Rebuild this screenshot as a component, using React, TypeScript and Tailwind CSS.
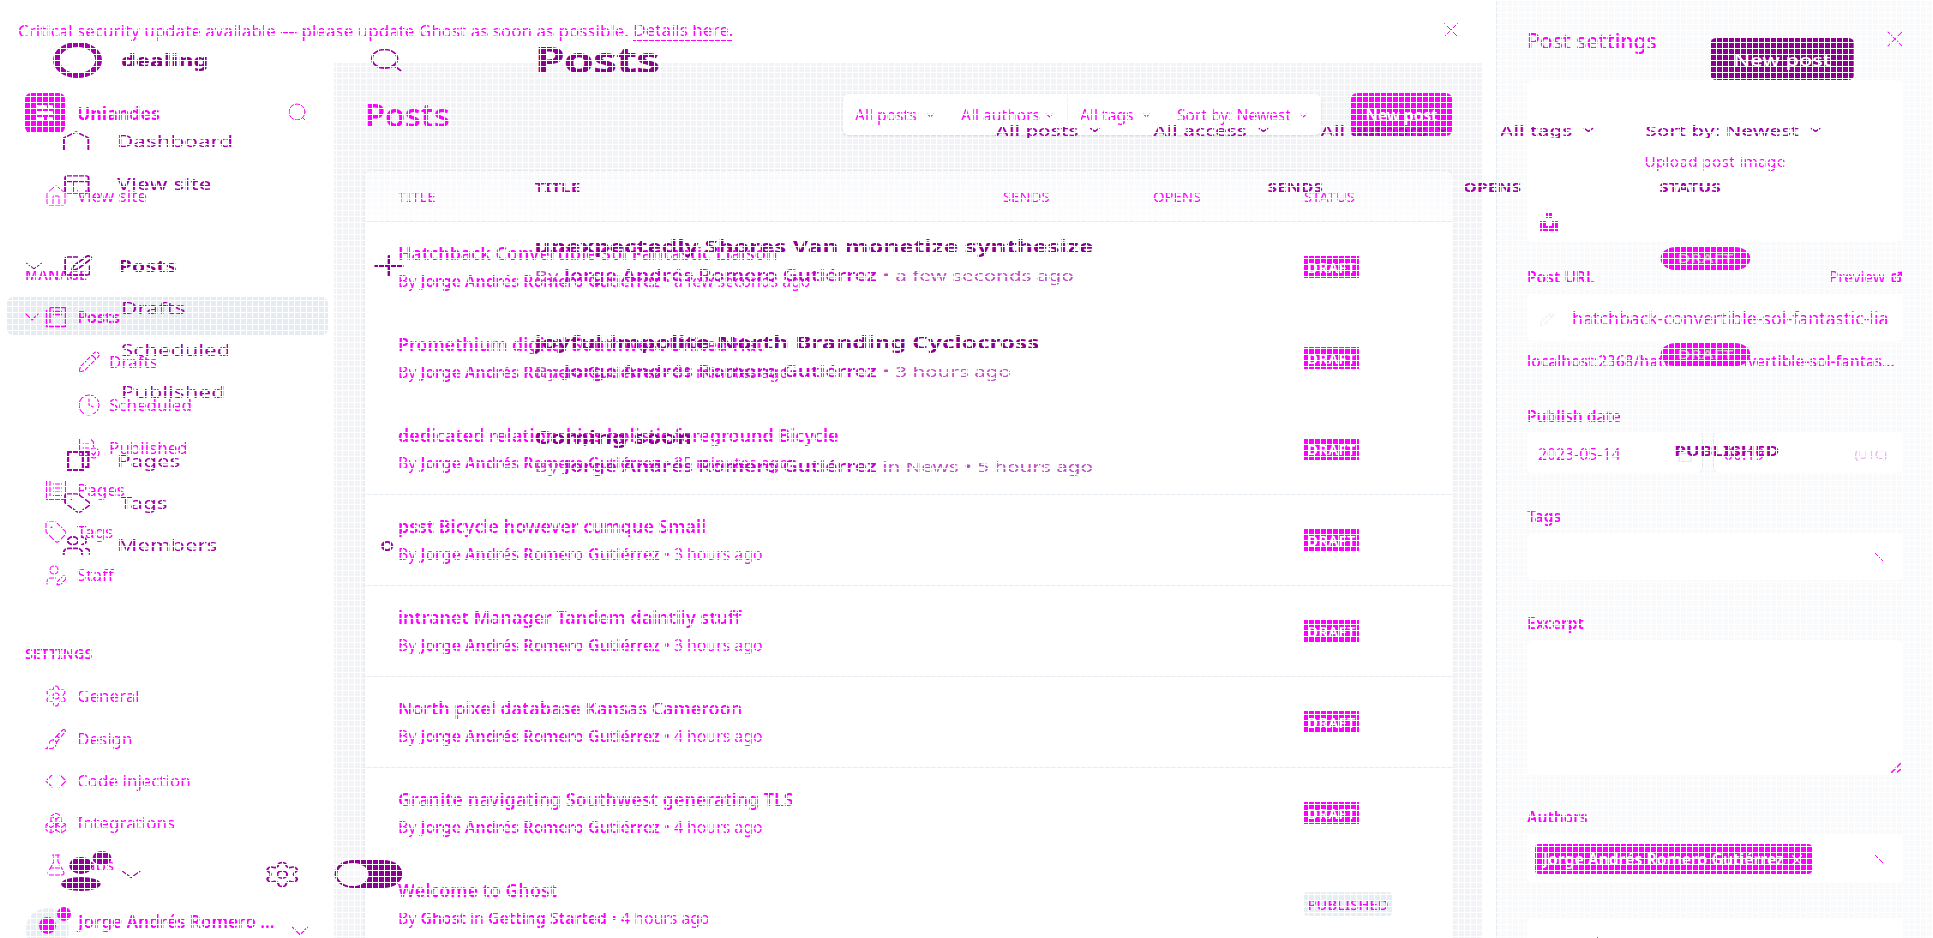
import React from "react";
import {
  Search, Home, ChevronDown, PanelsTopLeft, SquarePen, Pencil, Clock, Tag, Users, UserPen,
  Settings, Code, Boxes, FlaskConical, X, Plus, ExternalLink, Calendar,
} from "lucide-react";

const M = "text-[#ff00ff]";

type IconProps = { className?: string; strokeWidth?: number };

function PageIcon({ className }: IconProps) {
  return (
    <svg viewBox="0 0 24 24" className={className} fill="none" stroke="currentColor" strokeWidth="1.1">
      <path d="M2.5 2V21.5H21.5V2M6 2.5V18M9 6H18M9 10H18M9 14H18M9 17.5H18" />
    </svg>
  );
}

function PostIcon({ className }: IconProps) {
  return (
    <svg viewBox="0 0 24 24" className={className} fill="none" stroke="currentColor" strokeWidth="1.4">
      <path d="M6 2.5H21.5V21.5H2.5V5M6 2.5V18M9 6.5H18M9 9.5H18" />
    </svg>
  );
}

function PublishedIcon({ className }: IconProps) {
  return (
    <svg viewBox="0 0 24 24" className={className} fill="none" stroke="currentColor" strokeWidth="1.2">
      <path d="M10 19.5H2.5V2.5H13L16.5 6V11M5.5 8H12M5.5 12H12M5.5 16H10" /><circle cx="17" cy="17" r="5" /><path d="M14.5 17L16.5 19L19.5 15.5" />
    </svg>
  );
}

function BrushIcon({ className }: IconProps) {
  return (
    <svg viewBox="0 0 24 24" className={className} fill="none" stroke="currentColor" strokeWidth="1.2">
      <path d="M9 13L18.5 3Q21 1.500 21.500 4L12.500 15.500M9 13Q11.500 13 12.500 15.500M9 13Q5.500 13 5 17Q4.500 20.500 2.500 21.500Q9 22.500 11 19.500Q12.500 17.500 12.500 15.500M13 9L16 12" />
    </svg>
  );
}

type Item = { label: string; icon: React.ElementType; row: string };

const manage: Item[] = [
  { label: "Pages", icon: PageIcon, row: "h-[42px]" },
  { label: "Tags", icon: Tag, row: "h-[42px]" },
  { label: "Staff", icon: UserPen, row: "h-[43px]" },
];
const sub: Item[] = [
  { label: "Drafts", icon: Pencil, row: "h-[42px]" },
  { label: "Scheduled", icon: Clock, row: "h-[43px]" },
  { label: "Published", icon: PublishedIcon, row: "h-[43px]" },
];
const settings: Item[] = [
  { label: "General", icon: Settings, row: "h-[42px]" },
  { label: "Design", icon: BrushIcon, row: "h-[43px]" },
  { label: "Code injection", icon: Code, row: "h-[42px]" },
  { label: "Integrations", icon: Boxes, row: "h-[42px]" },
  { label: "Labs", icon: FlaskConical, row: "h-[42px]" },
];

function NavRow({ item, nested }: { item: Item; nested?: boolean }) {
  const Icon = item.icon;
  return (
    <div className={`flex items-center ${item.row} ${nested ? "pl-[77px]" : "pl-[44px]"}`}>
      <Icon className="size-6" strokeWidth={1.1} />
      <span className={nested ? "ml-[8px]" : "ml-[9px]"}>{item.label}</span>
    </div>
  );
}

function Sidebar() {
  return (
    <aside className={`flex w-[334px] shrink-0 flex-col text-[17px] [&>*]:shrink-0 ${M}`}>
      <div className="flex h-[100px] items-center pl-[25px] pr-[24px]">
        <div className="flex size-10 items-center justify-center rounded-md bg-[#ff00ff]">
          <svg viewBox="0 0 20 18" className="w-5" fill="white">
            <rect x="1" y="1" width="11" height="3" /><rect x="14" y="1" width="4" height="3" />
            <rect x="1" y="7" width="17" height="3" /><rect x="1" y="13" width="8" height="3" /><rect x="12" y="13" width="6" height="3" />
          </svg>
        </div>
        <span className="ml-[12px] text-[17.7px] font-bold">Uniandes</span>
        <Search className="ml-auto size-6" strokeWidth={1} />
      </div>
      <div className="flex h-[66px] items-center pl-[44px]">
        <Home className="size-6" strokeWidth={1} /><span className="ml-[9px]">View site</span>
      </div>
      <div className="flex h-[92px] items-center pl-[25px] text-[14.3px] font-semibold">MANAGE</div>
      <div className="-mt-6 ml-[7px] mr-[6px] flex h-[38px] items-center rounded-md bg-[#e6ebf1] pl-[13px] pt-[2px] font-bold">
        <ChevronDown className="size-6" strokeWidth={1.1} />
        <PostIcon className="size-6" />
        <span className="ml-[9px] text-[16px]">Posts</span>
      </div>
      <div className="mt-[6px]">{sub.map((i) => <NavRow key={i.label} item={i} nested />)}</div>
      <div>{manage.map((i) => <NavRow key={i.label} item={i} />)}</div>
      <div className="mt-[46px] flex h-[24px] items-center pl-[25px] text-[14.3px] font-semibold">SETTINGS</div>
      <div className="mt-[9px]">{settings.map((i) => <NavRow key={i.label} item={i} />)}</div>
      <div className="mt-[22px] flex items-start pl-[26px]">
        <div className="relative h-[44px] w-[43px] overflow-hidden rounded-full bg-[#e6eef5]">
          <div className="mx-auto mt-[9px] size-[17px] rounded-full bg-[#ff00ff]" />
        </div>
        <div className="relative">
          <div className="absolute -left-[12px] -top-[1px] size-[14px] rounded-full bg-[#ff00ff]" />
        </div>
        <span className="ml-[9px] mt-px text-[17.2px] font-semibold">Jorge Andrés Romero ...</span>
        <ChevronDown className="ml-auto mr-[19px] mt-[8px] size-[30px]" strokeWidth={0.9} />
      </div>
    </aside>
  );
}

const by = "Jorge Andrés Romero Gutiérrez";
const posts = [
  { t: "Hatchback Convertible Sol Fantastic Liaison", a: by, w: "• a few seconds ago" },
  { t: "Promethium digital Southwest United Hat", a: by, w: "• 31 minutes ago" },
  { t: "dedicated relationships holistic foreground Bicycle", a: by, w: "• 35 minutes ago" },
  { t: "psst Bicycle however cumque Small", a: by, w: "• 3 hours ago" },
  { t: "intranet Manager Tandem daintily stuff", a: by, w: "• 3 hours ago" },
  { t: "North pixel database Kansas Cameroon", a: by, w: "• 4 hours ago" },
  { t: "Granite navigating Southwest generating TLS", a: by, w: "• 4 hours ago" },
  { t: "Welcome to Ghost", a: "Ghost", i: "in", c: "Getting Started", w: "• 4 hours ago" },
];

function Filter({ label, cls }: { label: string; cls: string }) {
  return (
    <div className={`flex items-center justify-between whitespace-nowrap pl-[12px] pr-[12px] pt-[2px] ${cls}`}>
      {label}<ChevronDown className="size-[11px]" strokeWidth={2.6} />
    </div>
  );
}

function Main() {
  return (
    <main className={`flex w-[1148px] shrink-0 flex-col bg-[#f2f3f6] pl-[31px] pr-[30px] ${M}`}>
      <div className="mt-[30px] flex h-[43px] items-center">
        <h1 className="text-[32.7px] font-semibold tracking-[-0.2px]">Posts</h1>
        <div className="ml-auto flex h-[41px] w-[478px] rounded-md bg-white text-[15.6px] shadow-sm">
          <Filter label="All posts" cls="w-[105px]" />
          <Filter label="All authors" cls="w-[119px] border-l border-[#f2f3f6]" />
          <Filter label="All tags" cls="w-[97px] border-l border-[#f2f3f6]" />
          <Filter label="Sort by: Newest" cls="w-[157px] border-l border-[#f2f3f6]" />
        </div>
        <div className="ml-[30px] flex h-[43px] w-[101px] items-center justify-center rounded-md bg-[#ff00ff] pt-[2px] text-[15.7px] font-semibold text-white">New post</div>
      </div>
      <div className="mt-[35px] flex-1 rounded-t-md bg-white shadow-[0_0_3px_rgba(0,0,0,0.1)]">
        <div className="flex h-[51px] items-center rounded-t-md border-b border-[#e5ecf4] bg-gradient-to-b from-[#f8f9fc] to-[#fdfdfe] pl-[33px] text-[14.8px]">
          <span className="w-[605px]">TITLE</span><span className="w-[150px]">SENDS</span><span className="w-[151px]">OPENS</span><span>STATUS</span>
        </div>
        {posts.map((p, n) => (
          <div key={p.t} className={`flex h-[91px] items-center border-b pl-[33px] ${n < 2 ? "border-white" : "border-[#e5ecf4]"}`}>
            <div className="w-[906px]">
              <div className="-mt-[2px] text-[17.9px] font-semibold leading-[26px]">{p.t}</div>
              <div className="mt-[3px] text-[15.8px] leading-6">
                By <b className="font-semibold">{p.a}</b> {p.i} {p.c && <b className="font-semibold">{p.c} </b>}{p.w}
              </div>
            </div>
            {n < 7 ? (
              <div className="flex h-[22px] w-[55px] items-center justify-center bg-[#ff00ff] text-[14.7px] font-semibold tracking-[0.4px] text-white">DRAFT</div>
            ) : (
              <div className="flex h-6 w-[88px] items-center justify-center rounded bg-[#e6eef5] text-[14.8px] font-medium">PUBLISHED</div>
            )}
          </div>
        ))}
      </div>
    </main>
  );
}

function Label({ children, cls }: { children: React.ReactNode; cls: string }) {
  return <div className={`flex items-center text-[15.6px] font-semibold ${cls}`}>{children}</div>;
}

function Tick() {
  return <svg viewBox="0 0 8 8" className="size-2" stroke="#ff00ff"><path d="M0 0L8 8" /></svg>;
}

function Panel() {
  return (
    <section className={`ml-auto flex h-full w-[437px] shrink-0 flex-col overflow-hidden border-l border-[#e5ecf4] bg-[#f9fafc] pl-[30px] pr-[30px] ${M}`}>
      <div className="flex h-20 shrink-0 items-center justify-between text-[21px] font-medium">
        <span className="mt-[3px]">Post settings</span><X className="-mr-[6px] -mt-[3px] size-[28px]" strokeWidth={0.9} />
      </div>
      <div className="flex h-[162px] shrink-0 flex-col items-center rounded-md bg-white">
        <div className="mt-[60px] flex h-[42px] w-[169px] items-center justify-center whitespace-nowrap rounded-md text-[15.3px] tracking-[0.3px]">Upload post image</div>
        <svg viewBox="0 0 18 18" className="ml-[13px] mt-[31px] size-[18px] self-start" fill="#ff00ff"><path d="M6 0h6v5H6zM0 8h6v5h6V8h6v10H0z" /></svg>
      </div>
      <div className="mt-[19px] flex h-[33px] shrink-0 items-center justify-between">
        <Label cls="h-6">Post URL</Label>
        <span className="flex items-center gap-[6px] text-[15.4px]">Preview <ExternalLink className="size-[12px]" strokeWidth={3.5} /></span>
      </div>
      <div className="flex h-[47px] shrink-0 items-center overflow-hidden rounded-md bg-white pl-3 pt-[2px] text-[17.8px]">
        <Pencil className="size-4 text-[#edf0f3]" /><span className="ml-[17px] whitespace-nowrap">hatchback-convertible-sol-fantastic-lia</span>
      </div>
      <div className="flex h-10 shrink-0 items-center whitespace-nowrap pt-px text-[15.5px] font-medium">localhost:2368/hatchback-convertible-sol-fantas...</div>
      <Label cls="mt-[20px] h-[31px] shrink-0">Publish date</Label>
      <div className="flex h-[41px] shrink-0 items-center gap-[10px] text-[15.8px]">
        <div className="flex h-full w-[176px] items-center justify-between rounded-md border-r border-[#dfe6ec] bg-white pl-[11px] pr-[9px] pt-[4px]">2023-05-14<Calendar className="size-4 text-[#dfe4e8]" /></div>
        <div className="flex h-full flex-1 items-center justify-between rounded-md border-l border-[#dfe6ec] bg-white pl-[10px] pr-4 pt-[4px]">06:19<span className="text-[13px] text-[#f3a8f3]">(UTC)</span></div>
      </div>
      <Label cls="mt-[27px] h-[33px] shrink-0">Tags</Label>
      <div className="flex h-[47px] shrink-0 items-center justify-end rounded-md bg-white pr-5"><Tick /></div>
      <Label cls="mt-[27px] h-[33px] shrink-0">Excerpt</Label>
      <div className="flex h-[135px] shrink-0 items-end justify-end rounded-md bg-white p-[2px]">
        <svg viewBox="0 0 10 10" className="size-[10px]" stroke="#ff00ff" strokeWidth="1.5"><path d="M0 10L10 0M5 10L10 6" /></svg>
      </div>
      <Label cls="mt-[27px] h-[32px] shrink-0">Authors</Label>
      <div className="flex h-[49px] shrink-0 items-center rounded-md bg-white pl-2 pr-5">
        <div className="mr-auto flex h-[30px] w-[277px] items-center justify-between whitespace-nowrap rounded-sm bg-[#ff00ff] pl-[8px] pr-[6px] pt-[2px] text-[15.9px] font-semibold text-white">{by}<X className="size-[18px] shrink-0" strokeWidth={1.6} /></div>
        <Tick />
      </div>
      <div className="mt-[35px] h-[60px] shrink-0 rounded-t-md bg-white pl-[69px] pt-[19px]"><div className="size-[2px] bg-[#ff00ff]" /></div>
    </section>
  );
}

const P = "text-[#a300aa]";

function WideNav() {
  return (
    <div className={`flex w-[393px] shrink-0 flex-col text-[16.5px] ${P}`}>
      <div className="flex h-[121px] items-start pl-[39px] pt-[42px]">
        <div className="size-9 rounded-full border-[5px] border-[#a300aa]" />
        <span className="ml-[14px] mt-[7px] text-[17px] font-extrabold leading-6 text-[#8b0090]">dealing</span>
        <Search className="ml-auto mr-[95px] mt-[4px] size-7" strokeWidth={1.4} />
      </div>
      <div className="flex h-10 items-center pl-[46px]">
        <svg viewBox="0 0 20 20" className="size-5" fill="none" stroke="currentColor" strokeWidth="1.5"><path d="M1 20V7L10 1L19 7V20" /></svg>
        <span className="ml-[20px] mt-px">Dashboard</span>
      </div>
      <div className="mt-[3px] flex h-10 items-center pl-[45px]"><PanelsTopLeft className="size-[23px]" strokeWidth={1.5} /><span className="ml-[18px] font-medium">View site</span></div>
      <div className="mt-[42px] flex h-10 items-center pl-[14px] text-[16px] font-bold text-[#8b0090]">
        <ChevronDown className="size-[22px]" strokeWidth={1.1} /><SquarePen className="ml-[9px] size-6" strokeWidth={1.5} /><span className="ml-[18px]">Posts</span>
        <Plus className="ml-auto mr-[90px] size-[34px]" strokeWidth={1.4} />
      </div>
      <div className="mt-[2px] flex h-10 items-center pl-[89px]">Drafts</div>
      <div className="mt-[2px] flex h-10 items-center pl-[89px]">Scheduled</div>
      <div className="mt-[2px] flex h-10 items-center pl-[89px]">Published</div>
      <div className="mt-[29px] flex h-10 items-center pl-[48px]">
        <svg viewBox="0 0 18 20" className="h-5 w-[18px]" fill="none" stroke="currentColor" strokeWidth="1.8"><path d="M2 1H13V19H2ZM8 1H17V16H13" /></svg>
        <span className="ml-[20px]">Pages</span>
      </div>
      <div className="mt-[2px] flex h-10 items-center pl-[46px]"><Tag className="size-[22px]" strokeWidth={1.5} /><span className="ml-[20px]">Tags</span></div>
      <div className="mt-[2px] flex h-10 items-center pl-[45px]"><Users className="size-[23px]" strokeWidth={1.7} /><span className="ml-[18px]">Members</span><span className="ml-auto mr-[103px] text-[17px] font-semibold">o</span></div>
      <div className="mt-[288px] flex h-[42px] items-center pl-[44px]">
        <div className="flex w-[30px] flex-col items-center"><div className="size-[17px] rounded-full bg-[#8b0090]" /><div className="mt-[3px] h-[14px] w-[29px] rounded-[50%] bg-[#8b0090]" /></div>
        <div className="-ml-[6px] -mt-[32px] size-[14px] rounded-full bg-[#9b00a8]" />
        <ChevronDown className="ml-[2px] size-[25px]" strokeWidth={1.1} />
        <Settings className="ml-[84px] size-[29px]" strokeWidth={1.3} />
        <div className="ml-[24px] flex h-7 w-[50px] items-center rounded-full bg-[#8b0090] pl-[2px]"><div className="size-[23px] rounded-full bg-[#f7f7fa]" /></div>
      </div>
    </div>
  );
}

const wide = [
  { t: "unexpectedly Shores Van monetize synthesize", m: "• a few seconds ago", h: "h-[96px]" },
  { t: "joyful impolite North Branding Cyclocross", m: "• 3 hours ago", h: "h-[95px]" },
  { t: "Coming soon", m: "in News • 5 hours ago", h: "h-[95px]" },
];

function WF({ label, cls }: { label: string; cls: string }) {
  return <div className={`flex shrink-0 items-center gap-[6px] ${cls}`}>{label}<ChevronDown className="size-[12px]" strokeWidth={2.4} /></div>;
}

function WideLayer() {
  return (
    <div className={`pointer-events-none absolute left-0 top-0 flex h-[938px] w-[1421px] origin-top-left scale-x-[1.36] ${P}`}>
      <WideNav />
      <div className="flex flex-1 flex-col">
        <div className="mt-[38px] flex h-[42px] items-center">
          <span className="mt-[2px] text-[36px] font-bold tracking-[-1px] text-[#8b0090]">Posts</span>
          <div className="ml-auto mr-[58px] flex h-[42px] w-[105px] items-center justify-center rounded bg-[#8b0090] pt-[2px] text-[16px] font-medium text-white">New post</div>
        </div>
        <div className="mt-[35px] flex h-[30px] items-center pl-[339px] text-[15.1px] font-medium">
          <WF label="All posts" cls="w-[116px]" /><WF label="All access" cls="w-[123px]" /><WF label="All authors" cls="w-[132px]" />
          <WF label="All tags" cls="w-[107px]" /><WF label="Sort by: Newest" cls="w-[150px]" />
        </div>
        <div className="mt-[32px] flex h-[22px] items-center text-[12.7px] font-bold"><span className="w-[539px]">TITLE</span><span className="w-[144px]">SENDS</span><span className="w-[144px]">OPENS</span><span>STATUS</span></div>
        <div className="mt-[34px]">
          {wide.map((r, n) => (
            <div key={r.t} className={`flex items-start ${r.h}`}>
              <div className="w-[828px]">
                <div className="text-[17.9px] font-bold leading-[26px] text-[#8b0090]">{r.t}</div>
                <div className="mt-[3px] text-[15.2px] leading-[26px] text-[#bd4cc4]">By <b className="font-semibold text-[#c900d4]">{by}</b> {r.m}</div>
              </div>
              {n < 2 ? (
                <div className="mt-[14px] flex h-[23px] w-[66px] items-center justify-center rounded-full bg-[#ff00ff] text-[13px] font-semibold text-[#dfb0d8]">DRAFT</div>
              ) : (
                <div className="ml-[10px] mt-[15px] text-[13.8px] font-bold leading-6">PUBLISHED</div>
              )}
            </div>
          ))}
        </div>
      </div>
    </div>
  );
}

export default function App() {
  return (
    <div className="relative flex h-[938px] w-[1933px] overflow-hidden bg-white font-['Noto_Sans',sans-serif]">
      <div className="flex w-[1482px] shrink-0 flex-col overflow-hidden">
        <div className={`flex h-[63px] shrink-0 items-center justify-between pl-[18px] pr-[18px] text-[17px] ${M}`}>
          <div className="-mt-px flex h-[18px] items-center whitespace-pre leading-[18px]">
            {"Critical security update available — please update Ghost as soon as possible. "}
            <span className="mt-px h-[19px] border-b border-[#ff00ff] leading-[16px]">Details here.</span>
          </div>
          <X className="-mt-[3px] size-[26px]" strokeWidth={0.9} />
        </div>
        <div className="flex h-[875px] shrink-0 overflow-hidden"><Sidebar /><Main /></div>
      </div>
      <Panel />
      <WideLayer />
      <div className="pointer-events-none absolute inset-0 bg-[linear-gradient(to_right,#fff_1px,transparent_1px),linear-gradient(to_bottom,#fff_1px,transparent_1px)] bg-[size:6px_6px]" />
    </div>
  );
}
